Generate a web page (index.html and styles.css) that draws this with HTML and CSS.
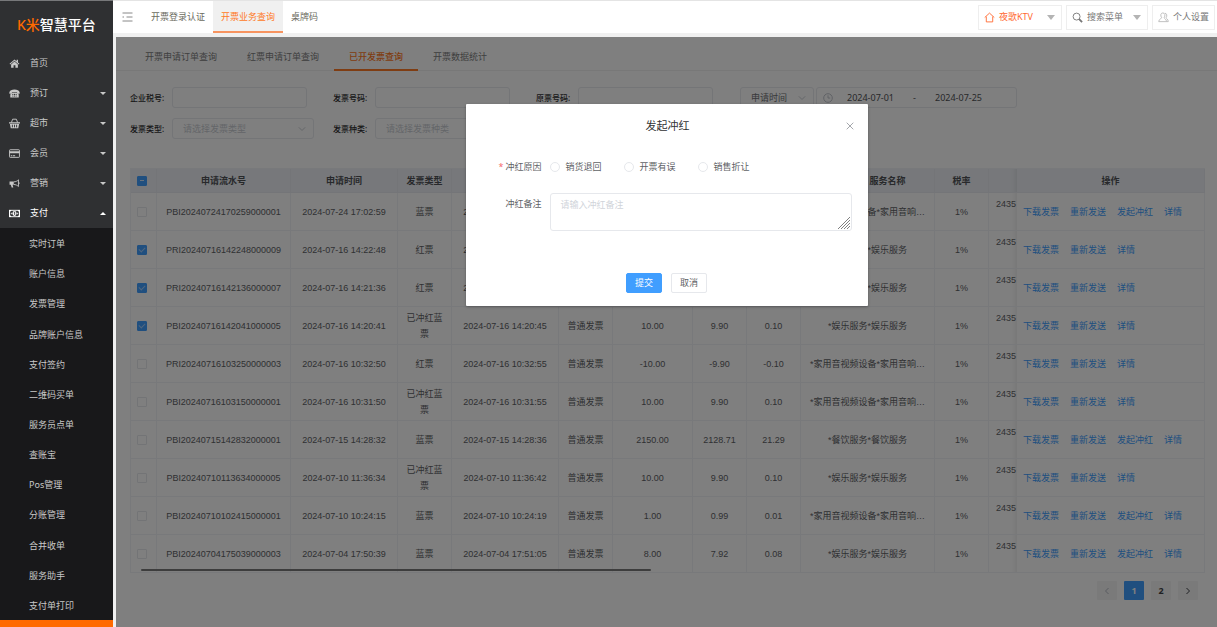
FILE: index.html
```html
<!DOCTYPE html>
<html lang="zh-CN">
<head>
<meta charset="utf-8">
<title>K米智慧平台</title>
<link rel="stylesheet" href="styles.css">
</head>
<body>
<div class="app">
  <aside class="sidebar">
    <div class="logo"><span class="logo-mark">K米</span>智慧平台</div>
    <nav class="menu">
      <a class="menu-item" href="#"><svg class="menu-icon" viewBox="0 0 12 12"><path d="M6 1.600 0.600 6.200l.7.8L6 3l4.700 4 .7-.8-1.600-1.400V2H8.300v1.600z"/><path d="M2.300 7 6 3.900 9.700 7v3.700H7V8H5v2.700H2.300z"/></svg>首页</a>
      <a class="menu-item" href="#"><svg class="menu-icon" viewBox="0 0 12 12"><path d="M.4 4.700C1 2.600 3 1.700 6 1.700s5 .9 5.600 3v1.500H8.800V4.700H3.200v1.500H.4z"/><path d="M3.600 5.200h4.800l2.200 2v3.100H1.400V7.200z"/><g class="cut"><circle cx="4.200" cy="7" r=".6"/><circle cx="6" cy="7" r=".6"/><circle cx="7.800" cy="7" r=".6"/><circle cx="4.200" cy="8.800" r=".6"/><circle cx="6" cy="8.800" r=".6"/><circle cx="7.800" cy="8.800" r=".6"/></g></svg>预订<span class="caret"></span></a>
      <a class="menu-item" href="#"><svg class="menu-icon" viewBox="0 0 12 12"><path d="M0 4.600h12V6H0zM1 6.500h10l-.9 4.700H1.900z"/><path class="line" d="M2.600 5 4 1.300h4L9.400 5"/><path class="cutline" d="M3.700 7.300v2.900M6 7.300v2.900M8.300 7.300v2.900"/></svg>超市<span class="caret"></span></a>
      <a class="menu-item" href="#"><svg class="menu-icon" viewBox="0 0 12 12"><rect class="line" x=".6" y="1.900" width="10.800" height="8.300" rx=".7"/><path d="M.6 3.600h10.800v2H.6zM2 8h1.500v1H2zM4.200 8h2.500v1H4.200z"/></svg>会员<span class="caret"></span></a>
      <a class="menu-item" href="#"><svg class="menu-icon" viewBox="0 0 12 12"><path d="M.6 3.800h4.600v3.600H3.900l.8 3H2.900l-.9-3H.6z"/><path class="line" d="M5.300 4.200c2 0 3.800-.9 5-2.200v7.300c-1.200-1.300-3-2.200-5-2.200M11 4.900v1.500"/></svg>营销<span class="caret"></span></a>
      <a class="menu-item menu-item-open" href="#"><svg class="menu-icon" viewBox="0 0 12 12"><path d="M0 2h12v8H0z"/><path class="cut" d="M1.200 4.200 2.500 3h7l1.300 1.200v3.600L9.500 9h-7L1.200 7.800z"/><ellipse cx="6" cy="6" rx="2.300" ry="2.700"/><path class="cutline" d="M5.300 5 6.200 4.500v3"/><path d="M2 5.300h1v1.400H2zM9 5.300h1v1.400H9z"/></svg>支付<span class="caret caret-up"></span></a>
    </nav>
    <nav class="submenu">
      <a href="#">实时订单</a>
      <a href="#">账户信息</a>
      <a href="#">发票管理</a>
      <a href="#">品牌账户信息</a>
      <a href="#">支付签约</a>
      <a href="#">二维码买单</a>
      <a href="#">服务员点单</a>
      <a href="#">查账宝</a>
      <a href="#">Pos管理</a>
      <a href="#">分账管理</a>
      <a href="#">合并收单</a>
      <a href="#">服务助手</a>
      <a href="#">支付单打印</a>
    </nav>
    <div class="sidebar-foot"></div>
  </aside>

  <div class="page">
    <header class="topbar">
      <button class="fold" type="button" aria-label="收起菜单"><svg viewBox="0 0 11 10"><path d="M.5 1h10M4.500 5h6M.5 9h10M.5 5h1.500"/></svg></button>
      <nav class="top-tabs">
        <a href="#">开票登录认证</a>
        <a class="active" href="#">开票业务查询</a>
        <a href="#">桌牌码</a>
      </nav>
      <div class="tools">
        <button class="tool tool-store" type="button"><svg class="tool-icon" viewBox="0 0 12 12"><path d="M.8 6 6 1.200 11.200 6M2.500 5v5.800h7V5"/></svg>夜歌KTV<span class="drop"></span></button>
        <button class="tool tool-search" type="button"><svg class="tool-icon" viewBox="0 0 12 12"><circle cx="5" cy="5" r="3.800"/><path class="thick" d="m7.800 7.800 3.200 3.200"/></svg>搜索菜单<span class="drop"></span></button>
        <button class="tool tool-user" type="button"><svg class="tool-icon" viewBox="0 0 12 12"><path d="M4 6.300C2.300 3.900 3 1 5.300 1s3 2.900 1.400 5.300c0 1 2.600 1.300 2.600 4.200H.8c0-2.900 3.200-3.200 3.200-4.200zM7.500 1.300c2.300.2 2.700 2.900 1.300 5 0 .9 2.400 1.300 2.400 4.200H9.300"/></svg>个人设置</button>
      </div>
    </header>

    <main class="main">
      <nav class="tabs">
        <a href="#">开票申请订单查询</a>
        <a href="#">红票申请订单查询</a>
        <a class="active" href="#">已开发票查询</a>
        <a href="#">开票数据统计</a>
      </nav>

      <form class="filters">
        <div class="field"><label for="tax">企业税号:</label><input id="tax" type="text"></div>
        <div class="field"><label for="no">发票号码:</label><input id="no" type="text"></div>
        <div class="field"><label for="origin">原票号码:</label><input id="origin" type="text"></div>
        <div class="field dates">
          <span class="select select-time"><select aria-label="时间类型"><option>申请时间</option></select><svg class="arrow" viewBox="0 0 8 8"><path d="m.8 2.300 3.200 3.200 3.200-3.200"/></svg></span>
          <div class="range">
            <svg class="clock" viewBox="0 0 10 10"><circle cx="5" cy="5" r="4.300"/><path d="M5 2.300V5h2.200"/></svg>
            <input type="text" aria-label="开始日期" value="2024-07-01"><span>-</span><input type="text" aria-label="结束日期" value="2024-07-25">
          </div>
        </div>
        <div class="field"><label for="type">发票类型:</label><span class="select"><select id="type"><option>请选择发票类型</option></select><svg class="arrow" viewBox="0 0 8 8"><path d="m.8 2.300 3.200 3.200 3.200-3.200"/></svg></span></div>
        <div class="field"><label for="kind">发票种类:</label><span class="select"><select id="kind"><option>请选择发票种类</option></select><svg class="arrow" viewBox="0 0 8 8"><path d="m.8 2.300 3.200 3.200 3.200-3.200"/></svg></span></div>
      </form>

      <div class="table-wrap">
        <table class="table">
          <colgroup><col class="c-check"><col class="c-serial"><col class="c-time"><col class="c-type"><col class="c-time"><col class="c-type"><col class="c-amount"><col class="c-type"><col class="c-type"><col class="c-serial"><col class="c-type"><col class="c-cut"><col class="c-ops"></colgroup>
          <thead><tr><th><input class="box partial" type="checkbox" aria-label="全选"></th><th>申请流水号</th><th>申请时间</th><th>发票类型</th><th>开票时间</th><th>发票种类</th><th>价税合计</th><th>金额</th><th>税额</th><th>服务名称</th><th>税率</th><th class="cut-cell"></th><th>操作</th></tr></thead>
          <tbody>
            <tr><td><input class="box" type="checkbox" aria-label="选择"></td><td>PBI20240724170259000001</td><td>2024-07-24 17:02:59</td><td>蓝票</td><td>2024-07-24 17:03:04</td><td>普通发票</td><td>10.00</td><td>9.90</td><td>0.10</td><td>*家用音视频设备*家用音响…</td><td>1%</td><td class="cut-cell">2435</td><td class="ops"><a href="#">下载发票</a><a href="#">重新发送</a><a href="#">发起冲红</a><a href="#">详情</a></td></tr>
            <tr><td><input class="box" type="checkbox" aria-label="选择" checked></td><td>PRI20240716142248000009</td><td>2024-07-16 14:22:48</td><td>红票</td><td>2024-07-16 14:22:53</td><td>普通发票</td><td>-10.00</td><td>-9.90</td><td>-0.10</td><td>*娱乐服务*娱乐服务</td><td>1%</td><td class="cut-cell">2435</td><td class="ops"><a href="#">下载发票</a><a href="#">重新发送</a><a href="#">详情</a></td></tr>
            <tr><td><input class="box" type="checkbox" aria-label="选择" checked></td><td>PRI20240716142136000007</td><td>2024-07-16 14:21:36</td><td>红票</td><td>2024-07-16 14:21:41</td><td>普通发票</td><td>-10.00</td><td>-9.90</td><td>-0.10</td><td>*娱乐服务*娱乐服务</td><td>1%</td><td class="cut-cell">2435</td><td class="ops"><a href="#">下载发票</a><a href="#">重新发送</a><a href="#">详情</a></td></tr>
            <tr><td><input class="box" type="checkbox" aria-label="选择" checked></td><td>PBI20240716142041000005</td><td>2024-07-16 14:20:41</td><td>已冲红蓝票</td><td>2024-07-16 14:20:45</td><td>普通发票</td><td>10.00</td><td>9.90</td><td>0.10</td><td>*娱乐服务*娱乐服务</td><td>1%</td><td class="cut-cell">2435</td><td class="ops"><a href="#">下载发票</a><a href="#">重新发送</a><a href="#">详情</a></td></tr>
            <tr><td><input class="box" type="checkbox" aria-label="选择"></td><td>PRI20240716103250000003</td><td>2024-07-16 10:32:50</td><td>红票</td><td>2024-07-16 10:32:55</td><td>普通发票</td><td>-10.00</td><td>-9.90</td><td>-0.10</td><td>*家用音视频设备*家用音响…</td><td>1%</td><td class="cut-cell">2435</td><td class="ops"><a href="#">下载发票</a><a href="#">重新发送</a><a href="#">详情</a></td></tr>
            <tr><td><input class="box" type="checkbox" aria-label="选择"></td><td>PBI20240716103150000001</td><td>2024-07-16 10:31:50</td><td>已冲红蓝票</td><td>2024-07-16 10:31:55</td><td>普通发票</td><td>10.00</td><td>9.90</td><td>0.10</td><td>*家用音视频设备*家用音响…</td><td>1%</td><td class="cut-cell">2435</td><td class="ops"><a href="#">下载发票</a><a href="#">重新发送</a><a href="#">详情</a></td></tr>
            <tr><td><input class="box" type="checkbox" aria-label="选择"></td><td>PBI20240715142832000001</td><td>2024-07-15 14:28:32</td><td>蓝票</td><td>2024-07-15 14:28:36</td><td>普通发票</td><td>2150.00</td><td>2128.71</td><td>21.29</td><td>*餐饮服务*餐饮服务</td><td>1%</td><td class="cut-cell">2435</td><td class="ops"><a href="#">下载发票</a><a href="#">重新发送</a><a href="#">发起冲红</a><a href="#">详情</a></td></tr>
            <tr><td><input class="box" type="checkbox" aria-label="选择"></td><td>PBI20240710113634000005</td><td>2024-07-10 11:36:34</td><td>已冲红蓝票</td><td>2024-07-10 11:36:42</td><td>普通发票</td><td>10.00</td><td>9.90</td><td>0.10</td><td>*娱乐服务*娱乐服务</td><td>1%</td><td class="cut-cell">2435</td><td class="ops"><a href="#">下载发票</a><a href="#">重新发送</a><a href="#">详情</a></td></tr>
            <tr><td><input class="box" type="checkbox" aria-label="选择"></td><td>PBI20240710102415000001</td><td>2024-07-10 10:24:15</td><td>蓝票</td><td>2024-07-10 10:24:19</td><td>普通发票</td><td>1.00</td><td>0.99</td><td>0.01</td><td>*家用音视频设备*家用音响…</td><td>1%</td><td class="cut-cell">2435</td><td class="ops"><a href="#">下载发票</a><a href="#">重新发送</a><a href="#">发起冲红</a><a href="#">详情</a></td></tr>
            <tr><td><input class="box" type="checkbox" aria-label="选择"></td><td>PBI20240704175039000003</td><td>2024-07-04 17:50:39</td><td>蓝票</td><td>2024-07-04 17:51:05</td><td>普通发票</td><td>8.00</td><td>7.92</td><td>0.08</td><td>*娱乐服务*娱乐服务</td><td>1%</td><td class="cut-cell">2435</td><td class="ops"><a href="#">下载发票</a><a href="#">重新发送</a><a href="#">发起冲红</a><a href="#">详情</a></td></tr>
          </tbody>
        </table>
        <div class="scrollbar"></div>
      </div>

      <nav class="pager">
        <button type="button" aria-label="上一页" disabled><svg viewBox="0 0 8 8"><path d="M5.500 1 2.500 4l3 3"/></svg></button>
        <button type="button" class="current">1</button>
        <button type="button">2</button>
        <button type="button" aria-label="下一页"><svg viewBox="0 0 8 8"><path d="m2.500 1 3 3-3 3"/></svg></button>
      </nav>

      <div class="overlay">
        <form class="dialog" role="dialog" aria-labelledby="dialog-title">
          <div class="dialog-head">
            <h2 id="dialog-title">发起冲红</h2>
            <button class="close" type="button" aria-label="关闭"><svg viewBox="0 0 8 8"><path d="m.7.7 6.600 6.600M7.300.7.7 7.300"/></svg></button>
          </div>
          <div class="row" role="radiogroup" aria-labelledby="reason">
            <span class="row-label required" id="reason">冲红原因</span>
            <div class="radios">
              <label><input type="radio" name="reason">销货退回</label>
              <label><input type="radio" name="reason">开票有误</label>
              <label><input type="radio" name="reason">销售折让</label>
            </div>
          </div>
          <div class="row row-remark">
            <label class="row-label" for="remark">冲红备注</label>
            <div class="remark">
              <textarea id="remark" placeholder="请输入冲红备注"></textarea>
              <svg class="grip" viewBox="0 0 12 12"><path d="M0 12 12 0M3 12l9-9M6 12l6-6M9 12l3-3"/></svg>
            </div>
          </div>
          <div class="dialog-foot">
            <button class="btn btn-primary" type="button">提交</button>
            <button class="btn" type="button">取消</button>
          </div>
        </form>
      </div>
    </main>
  </div>
</div>
</body>
</html>
```

FILE: styles.css
```css
* {
  box-sizing: border-box;
}

body {
  margin: 0;
  background: #f0f0f0;
  color: #606266;
  font: 9px/16px "Noto Sans", "Noto Sans CJK SC", sans-serif;
}

a {
  color: inherit;
  text-decoration: none;
}

button,
input,
select,
textarea {
  margin: 0;
  padding: 0;
  border: 0;
  background: none;
  color: inherit;
  font: inherit;
}

svg {
  display: block;
  flex: none;
  fill: none;
  stroke: currentColor;
}

.app {
  display: flex;
  min-height: 100vh;
  border-top: 1px solid #e4e4e4;
}

/* Sidebar */

.sidebar {
  display: flex;
  flex: none;
  flex-direction: column;
  width: 113px;
  margin-top: -1px;
  border-top: 1px solid #77787a;
  background: #2f3032;
  color: #c8c8c8;
}

.logo {
  height: 47px;
  padding-left: 17px;
  color: #fff;
  font-size: 14px;
  font-weight: 500;
  line-height: 47px;
  white-space: nowrap;
}

.logo-mark {
  color: #ff6a00;
}

.menu-item {
  display: flex;
  align-items: center;
  height: 30px;
  padding: 0 7px 0 9px;
}

.menu-icon {
  width: 11px;
  height: 11px;
  margin-right: 10px;
  fill: currentColor;
  stroke: none;
}

.menu-icon .line {
  fill: none;
  stroke: currentColor;
}

.menu-icon .cut {
  fill: #2f3032;
}

.menu-icon .cutline {
  fill: none;
  stroke: #2f3032;
}

.menu-item-open {
  color: #fff;
}

.caret {
  margin-left: auto;
  border: 3px solid transparent;
  border-top-color: currentColor;
  border-bottom: 0;
}

.caret-up {
  border-top: 0;
  border-bottom: 3px solid currentColor;
}

.submenu {
  display: flex;
  flex: 1;
  flex-direction: column;
  background: #18181a;
}

.submenu a {
  display: flex;
  flex: 1;
  align-items: center;
  padding: 2px 0 0 29px;
}

.sidebar-foot {
  height: 7px;
  background: #ff6a00;
}

/* Top bar */

.page {
  display: flex;
  flex: 1;
  flex-direction: column;
  min-width: 0;
}

.topbar {
  display: flex;
  height: 32px;
  margin-bottom: 4px;
  padding-right: 2px;
  background: #fff;
}

.fold {
  width: 30px;
  padding-left: 9px;
  color: #888;
}

.fold svg {
  width: 11px;
  height: 10px;
}

.top-tabs {
  display: flex;
  color: #6b6b60;
}

.top-tabs a {
  padding: 8px 8px 6px;
  border-bottom: 2px solid transparent;
}

.top-tabs .active {
  border-color: #f79460;
  background: #f0f0f0;
  color: #ff7a26;
}

.tools {
  display: flex;
  gap: 4px;
  align-items: center;
  margin-left: auto;
}

.tool {
  display: flex;
  align-items: center;
  height: 25px;
  padding: 0 6px 0 5px;
  border: 1px solid #eee;
  color: #777;
  white-space: nowrap;
}

.tool-icon {
  width: 11px;
  height: 11px;
  margin-right: 4px;
}

.tool-icon .thick {
  stroke-width: 2;
}

.tool-store {
  width: 84px;
  color: #ff6a33;
}

.tool-search {
  width: 82px;
}

.tool-user {
  width: 63px;
}

.tool-user .tool-icon {
  color: #bbb;
}

.drop {
  margin-left: auto;
  border: 4px solid transparent;
  border-top: 5px solid #b4b4b4;
  border-bottom: 0;
}

/* Invoice query */

.main {
  position: relative;
  flex: 1;
  margin-left: 3px;
  background: #fff;
}

.tabs {
  display: flex;
  padding-left: 14px;
  border-bottom: 1px solid #f0f0f0;
  color: #808080;
}

.tabs a {
  margin-bottom: -1px;
  padding: 12px 15px 4px;
  border-bottom: 2px solid transparent;
}

.tabs .active {
  border-color: #ff7a26;
  color: #ff7a26;
  font-weight: 500;
}

.filters {
  display: grid;
  grid-template-columns: 203px 203px 204px 1fr;
  row-gap: 10px;
  padding: 16px 13px 29px 14px;
}

.field {
  display: flex;
  align-items: center;
}

.field label {
  flex: none;
  width: 42px;
  color: #303133;
  font-size: 8px;
  font-weight: 500;
}

.field > input,
.select,
.range {
  height: 21px;
  border: 1px solid #e8eaee;
  border-radius: 3px;
}

.field > input {
  width: 135px;
}

.select {
  display: flex;
  align-items: center;
  width: 142px;
  padding: 0 7px 0 10px;
  color: #c8ccd2;
}

.select select {
  flex: 1;
  min-width: 0;
  appearance: none;
}

.select .arrow {
  width: 8px;
  height: 8px;
}

.dates {
  gap: 2px;
}

.select-time {
  width: 74px;
}

.select-time select {
  color: #707276;
}

.range {
  display: flex;
  align-items: center;
  width: 201px;
  padding-left: 6px;
  color: #505256;
}

.clock {
  width: 10px;
  height: 10px;
  margin-right: 14px;
  color: #c0c4cc;
}

.range input {
  width: 54px;
}

.range span {
  flex: none;
  width: 34px;
  padding-left: 12px;
}

/* Records table */

.table-wrap {
  position: relative;
  margin: 0 13px 0 14px;
}

.table {
  width: 100%;
  border: 1px solid #f0f2f6;
  border-right: 0;
  border-bottom: 0;
  border-spacing: 0;
  table-layout: fixed;
  font-family: "Liberation Sans", "Noto Sans CJK SC", sans-serif;
  text-align: center;
}

.c-check { width: 26px; }
.c-serial { width: 134px; }
.c-time { width: 107px; }
.c-type { width: 54px; }
.c-amount { width: 80px; }
.c-cut { width: 28px; }
.c-ops { width: 188px; }

.table th,
.table td {
  height: 38px;
  padding: 0 6px;
  border-right: 1px solid #f0f2f6;
  border-bottom: 1px solid #f0f2f6;
}

.table th {
  height: 24px;
  border-color: #e8ebf1;
  background: #eef1f6;
  color: #505256;
  font-weight: 700;
}

.table .cut-cell {
  padding: 0 0 16px 7px;
  border-right: 0;
  box-shadow: inset -6px 0 6px -6px rgba(0, 0, 0, 0.12);
  text-align: left;
}

.table th.cut-cell {
  padding: 0;
}

.table th:nth-child(10) {
  padding: 0 0 0 40px;
}

.table .ops {
  color: #409eff;
  text-align: left;
}

.ops a {
  margin-right: 11px;
}

.ops a:last-child {
  margin-right: 0;
}

.box {
  display: block;
  width: 10px;
  height: 10px;
  border: 1px solid #e6e8ec;
  border-radius: 1px;
  background: #fff;
  appearance: none;
}

.box:checked,
.box.partial {
  border-color: #409eff;
  background: #409eff;
}

.box:checked::before {
  display: block;
  width: 3px;
  height: 5px;
  margin: 0 auto;
  border: solid #a0cdff;
  border-width: 0 1px 1px 0;
  content: "";
  transform: rotate(45deg);
}

.box.partial::before {
  display: block;
  height: 1px;
  margin: 3px 2px;
  background: #d0e6ff;
  content: "";
}

.scrollbar {
  position: absolute;
  bottom: 2px;
  left: 1%;
  width: 47.5%;
  height: 2px;
  border-radius: 1px;
  background: #7a7a7a;
}

.pager {
  display: flex;
  gap: 7px;
  justify-content: flex-end;
  padding: 8px 19px 8px 14px;
}

.pager button {
  display: flex;
  align-items: center;
  justify-content: center;
  width: 20px;
  height: 19px;
  border-radius: 1px;
  background: #f4f4f5;
  color: #404246;
  font-weight: 700;
}

.pager button:disabled {
  color: #b4b8c0;
}

.pager .current {
  background: #409eff;
  color: #fff;
}

.pager svg {
  width: 8px;
  height: 8px;
}

/* Dialog */

.overlay {
  position: absolute;
  inset: 0;
  display: flex;
  align-items: flex-start;
  justify-content: center;
  padding-top: 67px;
  background: rgba(0, 0, 0, 0.5);
}

.dialog {
  width: 402px;
  padding: 14px 16px 13px;
  border-radius: 1px;
  background: #fff;
  box-shadow: 0 1px 3px rgba(0, 0, 0, 0.3);
}

.dialog-head {
  display: grid;
  grid-template-columns: 8px 1fr 8px;
  align-items: center;
  margin: 0 -2px 25px 0;
}

.dialog-head h2 {
  grid-column: 2;
  margin: 0;
  color: #303133;
  font-size: 11px;
  font-weight: 400;
  line-height: 16px;
  text-align: center;
}

.close {
  color: #a4a7ac;
}

.close svg {
  width: 8px;
  height: 8px;
}

.row {
  display: flex;
}

.row-label {
  flex: none;
  width: 68px;
  padding-right: 8px;
  text-align: right;
}

.required::before {
  margin-right: 2px;
  color: #f56c6c;
  content: "*";
}

.radios {
  display: flex;
  gap: 22px;
}

.radios label {
  display: flex;
  gap: 6px;
  align-items: center;
}

.radios input {
  width: 10px;
  height: 10px;
  border: 1px solid #e6e8ec;
  border-radius: 50%;
  appearance: none;
}

.row-remark {
  margin-top: 18px;
}

.row-remark .row-label {
  padding-top: 3px;
}

.remark {
  position: relative;
  flex: 1;
}

.remark textarea {
  display: block;
  width: 100%;
  height: 38px;
  padding: 3px 10px;
  border: 1px solid #e6e8ec;
  border-radius: 3px;
  resize: none;
}

.remark textarea::placeholder {
  color: #d0d4da;
}

.grip {
  position: absolute;
  right: 2px;
  bottom: 2px;
  width: 12px;
  height: 12px;
  color: #808080;
}

.dialog-foot {
  display: flex;
  gap: 9px;
  justify-content: center;
  margin-top: 42px;
}

.btn {
  width: 36px;
  height: 20px;
  border: 1px solid #e6e8ec;
  border-radius: 2px;
}

.btn-primary {
  border-color: #409eff;
  background: #409eff;
  color: #fff;
}
```
